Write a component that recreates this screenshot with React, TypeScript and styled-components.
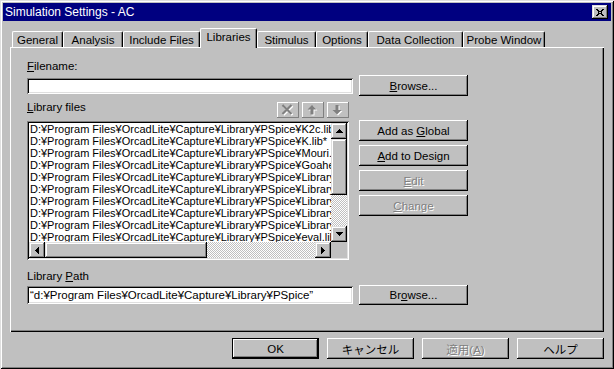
import React from 'react';
import styled, { createGlobalStyle, css } from 'styled-components';

const GlobalStyle = createGlobalStyle`
  html, body {
    margin: 0;
    padding: 0;
    background: #c0c0c0;
  }
  body {
    font-family: "Liberation Sans", "Noto Sans CJK JP", sans-serif;
    font-size: 12px;
    color: #000;
  }
  #root {
    width: 614px;
    height: 369px;
  }
`;

const raised = css`
  box-shadow: inset -1px -1px #000, inset 1px 1px #fff, inset -2px -2px #808080;
`;

const raisedScroll = css`
  box-shadow: inset -1px -1px #000, inset 1px 1px #dfdfdf, inset -2px -2px #808080,
    inset 2px 2px #fff;
`;

const sunken = css`
  box-shadow: inset 1px 1px #808080, inset -1px -1px #fff, inset 2px 2px #000,
    inset -2px -2px #dfdfdf;
`;

const Window = styled.div`
  width: 614px;
  height: 369px;
  box-sizing: border-box;
  padding: 3px;
  background: #c0c0c0;
  box-shadow: inset 1px 1px #dfdfdf, inset -1px -1px #000, inset 2px 2px #fff,
    inset -2px -2px #808080;
  display: flex;
  flex-direction: column;
`;

const TitleBar = styled.div`
  height: 18px;
  background: #000080;
  display: flex;
  align-items: center;
  justify-content: space-between;
  padding: 0 3px 0 2px;
`;

const TitleText = styled.span`
  color: #fff;
  font-size: 12px;
  line-height: 18px;
  white-space: nowrap;
`;

const CloseButton = styled.div`
  width: 16px;
  height: 14px;
  background: #c0c0c0;
  ${raisedScroll};
  display: flex;
  align-items: center;
  justify-content: center;
`;

const Body = styled.div`
  flex: 1;
  display: flex;
  flex-direction: column;
  padding: 7px 7px 0 7px;
`;

const TabRow = styled.div`
  height: 19px;
  display: flex;
  align-items: flex-end;
  padding-left: 2px;
`;

const Tab = styled.div<{ $active?: boolean; $w: number }>`
  position: relative;
  box-sizing: border-box;
  width: ${(p) => p.$w}px;
  height: ${(p) => (p.$active ? 20 : 16)}px;
  margin-bottom: ${(p) => (p.$active ? -1 : 0)}px;
  z-index: ${(p) => (p.$active ? 1 : 0)};
  background: #c0c0c0;
  border-left: 1px solid #fff;
  border-top: 1px solid #fff;
  border-right: 1px solid #000;
  border-radius: 2px 2px 0 0;
  box-shadow: inset -1px 0 #808080;
  display: flex;
  align-items: ${(p) => (p.$active ? 'flex-start' : 'center')};
  justify-content: center;
  padding-top: ${(p) => (p.$active ? 2 : 0)}px;
  font-size: 11.5px;
  white-space: nowrap;
`;

const Panel = styled.div`
  height: 285px;
  box-sizing: border-box;
  box-shadow: inset 1px 1px #fff, inset -1px -1px #000, inset -2px -2px #808080;
  padding: 13px 0 0 17px;
  display: flex;
  flex-direction: column;
`;

const Label = styled.div<{ $gap?: number }>`
  height: 13px;
  line-height: 13px;
  font-size: 11.5px;
  margin-top: ${(p) => p.$gap ?? 0}px;
  margin-bottom: 2px;
  white-space: nowrap;
`;

const Key = styled.span`
  text-decoration: underline;
  text-underline-offset: 1px;
`;

const FieldRow = styled.div<{ $h: number }>`
  display: flex;
  align-items: center;
  gap: 6px;
  height: ${(p) => p.$h}px;
`;

const TextField = styled.div<{ $h: number }>`
  width: 326px;
  height: ${(p) => p.$h}px;
  box-sizing: border-box;
  background: #fff;
  ${sunken};
  padding: 0 3px;
  font-size: 11.5px;
  line-height: ${(p) => p.$h}px;
  white-space: nowrap;
  overflow: hidden;
`;

const Button = styled.div<{ $w?: number; $h?: number; $disabled?: boolean; $default?: boolean }>`
  width: ${(p) => p.$w ?? 109}px;
  height: ${(p) => p.$h ?? 21}px;
  box-sizing: border-box;
  background: #c0c0c0;
  ${(p) =>
    p.$default
      ? css`
          border: 1px solid #000;
          box-shadow: inset -1px -1px #000, inset 1px 1px #fff, inset -2px -2px #808080;
        `
      : raised};
  display: flex;
  align-items: center;
  justify-content: center;
  font-size: 11.5px;
  white-space: nowrap;
  color: ${(p) => (p.$disabled ? '#808080' : '#000')};
  text-shadow: ${(p) => (p.$disabled ? '1px 1px #fff' : 'none')};
`;

const LibHeader = styled.div`
  width: 322px;
  height: 17px;
  margin-top: 5px;
  margin-bottom: 3px;
  display: flex;
  justify-content: space-between;
  align-items: flex-start;
`;

const HeaderLabel = styled.div`
  line-height: 13px;
  font-size: 11.5px;
  padding-top: 0px;
`;

const IconGroup = styled.div`
  display: flex;
  gap: 3px;
  align-self: flex-end;
`;

const IconButton = styled.div`
  width: 22px;
  height: 16px;
  box-sizing: border-box;
  box-shadow: inset -1px -1px #808080, inset 1px 1px #fff;
  display: flex;
  align-items: center;
  justify-content: center;
`;

const ListRow = styled.div`
  display: flex;
  gap: 10px;
  align-items: flex-start;
`;

const ListBox = styled.div`
  width: 322px;
  height: 139px;
  box-sizing: border-box;
  padding: 2px;
  background: #fff;
  ${sunken};
  display: grid;
  grid-template-columns: 1fr 16px;
  grid-template-rows: 1fr 16px;
`;

const ListItems = styled.div`
  overflow: hidden;
  padding: 0 0 0 1px;
`;

const ListItem = styled.div`
  height: 12px;
  line-height: 12px;
  font-size: 11px;
  white-space: nowrap;
`;

const VScroll = styled.div`
  display: flex;
  flex-direction: column;
`;

const HScroll = styled.div`
  display: flex;
`;

const ScrollButton = styled.div`
  width: 16px;
  height: 16px;
  flex: none;
  box-sizing: border-box;
  background: #c0c0c0;
  ${raisedScroll};
  display: flex;
  align-items: center;
  justify-content: center;
`;

const Thumb = styled.div<{ $len: number; $vertical?: boolean }>`
  flex: none;
  ${(p) => (p.$vertical ? `height: ${p.$len}px;` : `width: ${p.$len}px;`)}
  background: #c0c0c0;
  ${raisedScroll};
`;

const Track = styled.div`
  flex: 1;
  background-color: #fff;
  background-image: conic-gradient(#c0c0c0 25%, #fff 0 50%, #c0c0c0 0 75%, #fff 0);
  background-size: 2px 2px;
`;

const Corner = styled.div`
  background: #c0c0c0;
`;

const SideButtons = styled.div`
  display: flex;
  flex-direction: column;
  gap: 4px;
  margin-top: -1px;
`;

const Footer = styled.div`
  margin-top: 6px;
  display: flex;
  justify-content: flex-end;
  gap: 8px;
`;

const arrowPaths = {
  up: 'M3 0h1v1h-1z M2 1h3v1h-3z M1 2h5v1h-5z M0 3h7v1h-7z',
  down: 'M0 0h7v1h-7z M1 1h5v1h-5z M2 2h3v1h-3z M3 3h1v1h-1z',
  left: 'M3 0h1v7h-1z M2 1h1v5h-1z M1 2h1v3h-1z M0 3h1v1h-1z',
  right: 'M0 0h1v7h-1z M1 1h1v5h-1z M2 2h1v3h-1z M3 3h1v1h-1z',
};

const Arrow: React.FC<{ dir: keyof typeof arrowPaths }> = ({ dir }) => {
  const vertical = dir === 'up' || dir === 'down';
  const w = vertical ? 7 : 4;
  const h = vertical ? 4 : 7;
  return (
    <svg width={w} height={h} viewBox={`0 0 ${w} ${h}`} shapeRendering="crispEdges">
      <path d={arrowPaths[dir]} fill="#000" />
    </svg>
  );
};

// disabled toolbar glyphs: grey shape with a white copy shifted by one pixel
const DisabledGlyph: React.FC<{ d: string; stroke?: boolean }> = ({ d, stroke }) => (
  <svg width="14" height="13" viewBox="0 0 14 13">
    <g transform="translate(1 1)">
      {stroke ? (
        <path d={d} stroke="#fff" strokeWidth="2.2" fill="none" />
      ) : (
        <path d={d} fill="#fff" />
      )}
    </g>
    {stroke ? (
      <path d={d} stroke="#808080" strokeWidth="2.2" fill="none" />
    ) : (
      <path d={d} fill="#808080" />
    )}
  </svg>
);

const tabs = [
  { name: 'General', w: 51 },
  { name: 'Analysis', w: 60 },
  { name: 'Include Files', w: 77 },
  { name: 'Libraries', w: 57, active: true },
  { name: 'Stimulus', w: 59 },
  { name: 'Options', w: 52 },
  { name: 'Data Collection', w: 95 },
  { name: 'Probe Window', w: 82 },
];

const base = 'D:¥Program Files¥OrcadLite¥Capture¥Library¥PSpice¥';
const files = [
  'K2c.lib',
  'K.lib*',
  'Mouri.lib',
  'Goahead.lib',
  'Library1.lib',
  'Library2.lib',
  'Library3.lib',
  'Library4.lib',
  'Library5.lib',
  'eval.lib',
];

const App: React.FC = () => {
  return (
    <>
      <GlobalStyle />
      <Window>
        <TitleBar>
          <TitleText>Simulation Settings - AC</TitleText>
          <CloseButton>
            <svg width="8" height="7" viewBox="0 0 8 7" shapeRendering="crispEdges">
              <path
                d="M0 0h2v1h-2z M6 0h2v1h-2z M1 1h2v1h-2z M5 1h2v1h-2z M2 2h4v1h-4z M3 3h2v1h-2z M2 4h4v-1h-4z M2 4h4v1h-4z M1 5h2v1h-2z M5 5h2v1h-2z M0 6h2v1h-2z M6 6h2v1h-2z"
                fill="#000"
              />
            </svg>
          </CloseButton>
        </TitleBar>
        <Body>
          <TabRow>
            {tabs.map((t) => (
              <Tab key={t.name} $w={t.w} $active={t.active}>
                {t.name}
              </Tab>
            ))}
          </TabRow>
          <Panel>
            <Label>
              <Key>F</Key>ilename:
            </Label>
            <FieldRow $h={21}>
              <TextField $h={16} />
              <Button>
                <span>
                  <Key>B</Key>rowse...
                </span>
              </Button>
            </FieldRow>
            <LibHeader>
              <HeaderLabel>
                <Key>L</Key>ibrary files
              </HeaderLabel>
              <IconGroup>
                <IconButton>
                  <DisabledGlyph d="M1.5 1 L10.5 10 M10.5 1 L1.5 10" stroke />
                </IconButton>
                <IconButton>
                  <DisabledGlyph d="M6 1 L10.5 5.5 L7.5 5.5 L7.5 10.5 L4.5 10.5 L4.5 5.5 L1.5 5.5 Z" />
                </IconButton>
                <IconButton>
                  <DisabledGlyph d="M4.5 1 L7.5 1 L7.5 6 L10.5 6 L6 10.5 L1.5 6 L4.5 6 Z" />
                </IconButton>
              </IconGroup>
            </LibHeader>
            <ListRow>
              <ListBox>
                <ListItems>
                  {files.map((f) => (
                    <ListItem key={f}>
                      {base}
                      {f}
                    </ListItem>
                  ))}
                </ListItems>
                <VScroll>
                  <ScrollButton>
                    <Arrow dir="up" />
                  </ScrollButton>
                  <Thumb $vertical $len={56} />
                  <Track />
                  <ScrollButton>
                    <Arrow dir="down" />
                  </ScrollButton>
                </VScroll>
                <HScroll>
                  <ScrollButton>
                    <Arrow dir="left" />
                  </ScrollButton>
                  <Thumb $len={162} />
                  <Track />
                  <ScrollButton>
                    <Arrow dir="right" />
                  </ScrollButton>
                </HScroll>
                <Corner />
              </ListBox>
              <SideButtons>
                <Button>
                  <span>
                    Add as <Key>G</Key>lobal
                  </span>
                </Button>
                <Button>
                  <span>
                    <Key>A</Key>dd to Design
                  </span>
                </Button>
                <Button $disabled>
                  <span>
                    <Key>E</Key>dit
                  </span>
                </Button>
                <Button $disabled>
                  <span>
                    <Key>C</Key>hange
                  </span>
                </Button>
              </SideButtons>
            </ListRow>
            <Label $gap={10}>
              Library <Key>P</Key>ath
            </Label>
            <FieldRow $h={20}>
              <TextField $h={18}>“d:¥Program Files¥OrcadLite¥Capture¥Library¥PSpice”</TextField>
              <Button $h={20}>
                <span>
                  Br<Key>o</Key>wse...
                </span>
              </Button>
            </FieldRow>
          </Panel>
          <Footer>
            <Button $w={87} $default>
              OK
            </Button>
            <Button $w={87}>キャンセル</Button>
            <Button $w={87} $disabled>
              <span>
                適用(<Key>A</Key>)
              </span>
            </Button>
            <Button $w={87}>ヘルプ</Button>
          </Footer>
        </Body>
      </Window>
    </>
  );
};

export default App;
